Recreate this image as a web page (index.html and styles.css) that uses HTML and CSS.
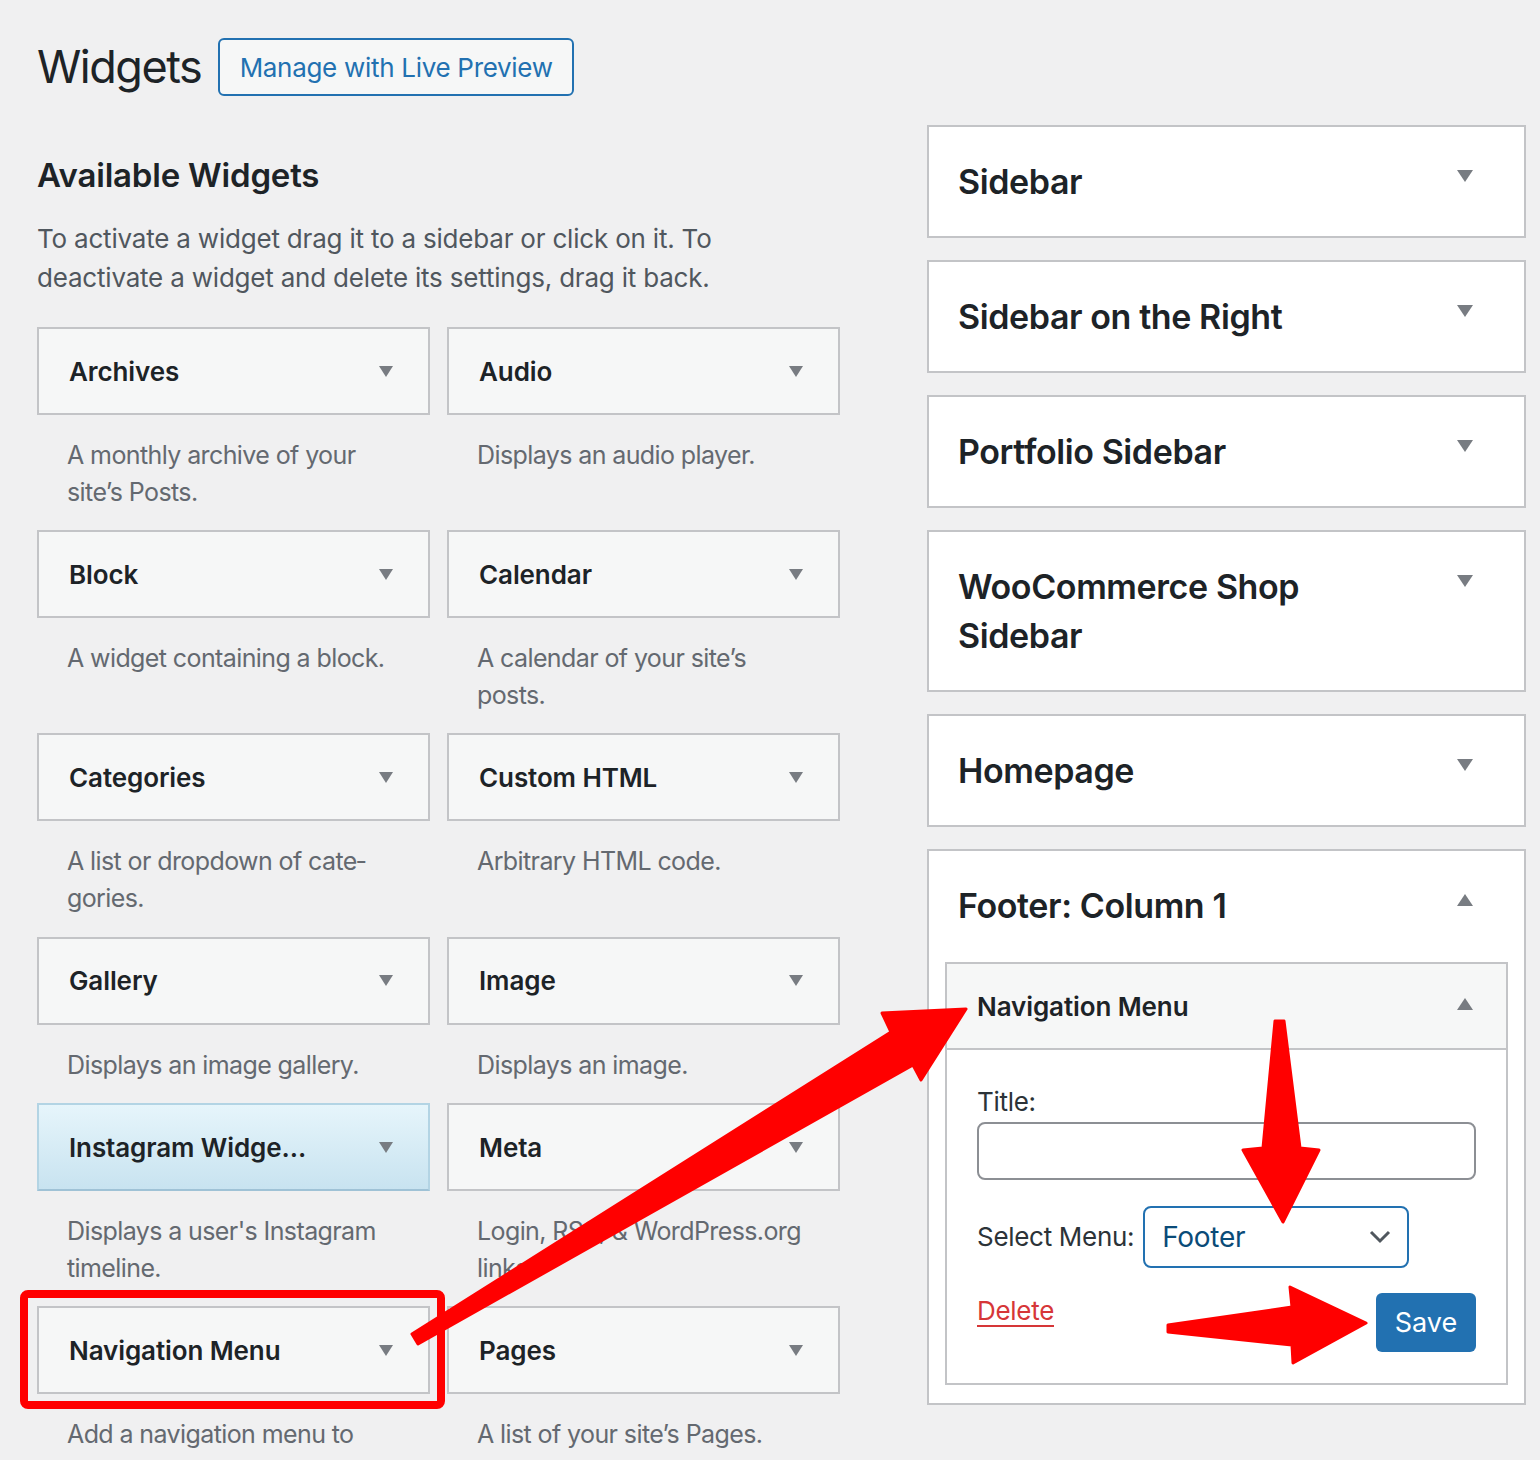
FILE: index.html
```html
<!DOCTYPE html>
<html lang="en">
<head>
<meta charset="utf-8">
<title>Widgets</title>
<link rel="stylesheet" href="styles.css">
</head>
<body>
<div class="wrap">
  <div class="head">
    <h1 class="page-title">Widgets</h1>
    <a class="btn-outline" href="#">Manage with Live Preview</a>
  </div>
  <div class="cols">
    <div class="left">
      <h2 class="avail-title">Available Widgets</h2>
      <p class="intro">To activate a widget drag it to a sidebar or click on it. To deactivate a widget and delete its settings, drag it back.</p>
      <div class="grid">
        <div class="widget"><div class="w-head"><span class="w-title">Archives</span><span class="tri-down"></span></div><p class="w-desc">A monthly archive of your site’s Posts.</p></div>
        <div class="widget"><div class="w-head"><span class="w-title">Audio</span><span class="tri-down"></span></div><p class="w-desc">Displays an audio player.</p></div>
        <div class="widget"><div class="w-head"><span class="w-title">Block</span><span class="tri-down"></span></div><p class="w-desc">A widget containing a block.</p></div>
        <div class="widget"><div class="w-head"><span class="w-title">Calendar</span><span class="tri-down"></span></div><p class="w-desc">A calendar of your site’s posts.</p></div>
        <div class="widget"><div class="w-head"><span class="w-title">Categories</span><span class="tri-down"></span></div><p class="w-desc">A list or dropdown of cate&shy;gories.</p></div>
        <div class="widget"><div class="w-head"><span class="w-title">Custom HTML</span><span class="tri-down"></span></div><p class="w-desc">Arbitrary HTML code.</p></div>
        <div class="widget"><div class="w-head"><span class="w-title">Gallery</span><span class="tri-down"></span></div><p class="w-desc">Displays an image gallery.</p></div>
        <div class="widget"><div class="w-head"><span class="w-title">Image</span><span class="tri-down"></span></div><p class="w-desc">Displays an image.</p></div>
        <div class="widget"><div class="w-head w-head-hl"><span class="w-title">Instagram Widge...</span><span class="tri-down"></span></div><p class="w-desc">Displays a user's Instagram timeline.</p></div>
        <div class="widget"><div class="w-head"><span class="w-title">Meta</span><span class="tri-down"></span></div><p class="w-desc">Login, RSS, &amp; WordPress.org links.</p></div>
        <div class="widget"><div class="w-head"><span class="w-title">Navigation Menu</span><span class="tri-down"></span></div><p class="w-desc">Add a navigation menu to</p></div>
        <div class="widget"><div class="w-head"><span class="w-title">Pages</span><span class="tri-down"></span></div><p class="w-desc">A list of your site’s Pages.</p></div>
      </div>
    </div>
    <div class="right">
      <div class="sidebar"><div class="s-head"><h2 class="s-title">Sidebar</h2><span class="s-tri tri-down-lg"></span></div></div>
      <div class="sidebar"><div class="s-head"><h2 class="s-title">Sidebar on the Right</h2><span class="s-tri tri-down-lg"></span></div></div>
      <div class="sidebar"><div class="s-head"><h2 class="s-title">Portfolio Sidebar</h2><span class="s-tri tri-down-lg"></span></div></div>
      <div class="sidebar"><div class="s-head"><h2 class="s-title">WooCommerce Shop Sidebar</h2><span class="s-tri tri-down-lg"></span></div></div>
      <div class="sidebar"><div class="s-head"><h2 class="s-title">Homepage</h2><span class="s-tri tri-down-lg"></span></div></div>
      <div class="sidebar sidebar-open">
        <div class="s-head"><h2 class="s-title">Footer: Column 1</h2><span class="s-tri tri-up-lg"></span></div>
        <div class="inner-widget">
          <div class="iw-head"><span class="w-title">Navigation Menu</span><span class="iw-tri tri-up-lg"></span></div>
          <div class="iw-body">
            <label class="field-label">Title:</label>
            <div class="text-input"></div>
            <div class="select-row">
              <span class="field-label">Select Menu:</span>
              <div class="select-box"><span class="select-val">Footer</span>
                <svg class="chev" width="22" height="14" viewBox="0 0 22 14"><path d="M2 2 L11 11 L20 2" fill="none" stroke="#50575e" stroke-width="3"/></svg>
              </div>
            </div>
            <div class="actions">
              <a class="delete-link" href="#">Delete</a>
              <a class="btn-primary" href="#">Save</a>
            </div>
          </div>
        </div>
      </div>
    </div>
  </div>
</div>
<svg class="annot" width="1540" height="1460" viewBox="0 0 1540 1460">
  <rect x="24" y="1294" width="417" height="111" rx="4" fill="none" stroke="#ff0000" stroke-width="8"/>
  <polygon points="412,1334 418,1344 913,1065 921,1080 966,1009 882,1013 891,1032" fill="#ff0000" stroke="#ff0000" stroke-width="3" stroke-linejoin="round"/>
  <polygon points="1275,1021 1284,1021 1300,1148 1319,1150 1283,1222 1243,1150 1263,1148" fill="#ff0000" stroke="#ff0000" stroke-width="3" stroke-linejoin="round"/>
  <polygon points="1168,1325 1168,1332 1292,1345 1293,1363 1366,1323 1290,1287 1292,1307" fill="#ff0000" stroke="#ff0000" stroke-width="3" stroke-linejoin="round"/>
</svg>
</body>
</html>
```

FILE: styles.css
```css
* { box-sizing: border-box; }
html, body { margin: 0; padding: 0; }
body {
  background: #f0f0f1;
  font-family: Inter, "Noto Sans", "Liberation Sans", sans-serif;
  color: #1d2327;
  position: relative;
  width: 1540px;
  height: 1460px;
  overflow: hidden;
}
.wrap { padding: 38px 14px 0 37px; }
.head { display: flex; align-items: center; height: 58px; }
.page-title {
  margin: 0;
  font-size: 45px;
  font-weight: 400;
  line-height: 58px;
  letter-spacing: -1.5px;
}
.btn-outline {
  margin-left: 17px;
  height: 58px;
  width: 356px;
  border: 2px solid #2271b1;
  border-radius: 6px;
  background: #f6f7f7;
  color: #2271b1;
  font-size: 26px;
  letter-spacing: -0.3px;
  text-decoration: none;
  display: flex;
  align-items: center;
  justify-content: center;
}
.cols { display: flex; gap: 87px; margin-top: 29px; }
.left { width: 803px; }
.right { width: 599px; display: flex; flex-direction: column; gap: 22px; }
.avail-title {
  margin: 30px 0 0;
  font-size: 33px;
  font-weight: 600;
  line-height: 40px;
  letter-spacing: -0.2px;
}
.intro {
  margin: 24px 0 0;
  font-size: 26px;
  line-height: 39px;
  letter-spacing: -0.2px;
  color: #50575e;
}
.grid {
  margin-top: 30px;
  display: grid;
  grid-template-columns: 393px 393px;
  column-gap: 17px;
}
.w-head {
  height: 88px;
  border: 2px solid #c3c4c7;
  background: #f6f7f7;
  display: flex;
  align-items: center;
  justify-content: space-between;
  padding: 0 35px 0 30px;
}
.w-head-hl {
  background: linear-gradient(#e6f5fb, #c8e3f0);
  border-color: #b3d4e4;
  border-bottom-color: #9fc2d6;
}
.w-title { font-size: 26px; font-weight: 600; color: #1d2327; letter-spacing: -0.1px; }
.tri-down {
  width: 0; height: 0;
  border-left: 7.5px solid transparent;
  border-right: 7.5px solid transparent;
  border-top: 11px solid #787c82;
}
.w-desc {
  margin: 0;
  padding: 22px 30px 20px 30px;
  font-size: 25px;
  line-height: 36.6px;
  letter-spacing: -0.6px;
  color: #646970;
}
.sidebar {
  border: 2px solid #c3c4c7;
  background: #fff;
}
.s-head {
  display: flex;
  justify-content: space-between;
  align-items: flex-start;
  padding: 30px 51px 30px 29px;
}
.s-title {
  margin: 0;
  max-width: 420px;
  font-size: 34px;
  font-weight: 600;
  line-height: 49px;
  letter-spacing: -0.4px;
}
.s-tri { margin-top: 13px; }
.tri-down-lg {
  width: 0; height: 0;
  border-left: 8px solid transparent;
  border-right: 8px solid transparent;
  border-top: 12px solid #787c82;
}
.tri-up-lg {
  width: 0; height: 0;
  border-left: 8px solid transparent;
  border-right: 8px solid transparent;
  border-bottom: 12px solid #787c82;
}
.inner-widget {
  margin: 2px 16px 18px;
  border: 2px solid #c3c4c7;
  background: #fff;
}
.iw-head {
  height: 86px;
  background: #f6f7f7;
  border-bottom: 2px solid #c3c4c7;
  display: flex;
  align-items: center;
  justify-content: space-between;
  padding: 0 33px 0 30px;
}
.iw-tri { margin-top: -4px; }
.iw-body { padding: 34px 30px 31px; }
.field-label {
  display: block;
  font-size: 26px;
  line-height: 36px;
  letter-spacing: -0.3px;
  color: #2c3338;
}
.text-input {
  margin-top: 2px;
  height: 58px;
  border: 2px solid #8c8f94;
  border-radius: 8px;
  background: #fff;
}
.select-row {
  margin-top: 26px;
  display: flex;
  align-items: center;
  gap: 9px;
}
.select-box {
  width: 266px;
  height: 62px;
  border: 2px solid #2271b1;
  border-radius: 8px;
  display: flex;
  align-items: center;
  justify-content: space-between;
  padding: 0 16px 0 17px;
}
.select-val { font-size: 28px; color: #0a4b78; letter-spacing: -0.3px; }
.actions {
  margin-top: 25px;
  display: flex;
  justify-content: space-between;
  align-items: flex-start;
}
.delete-link {
  font-size: 26px;
  line-height: 36px;
  letter-spacing: -0.3px;
  color: #d63638;
  text-decoration: underline;
  text-underline-offset: 5px;
}
.btn-primary {
  width: 100px;
  height: 59px;
  background: #2271b1;
  border-radius: 6px;
  color: #fff;
  font-size: 27px;
  text-decoration: none;
  display: flex;
  align-items: center;
  justify-content: center;
}
.annot { position: absolute; left: 0; top: 0; pointer-events: none; }
```
